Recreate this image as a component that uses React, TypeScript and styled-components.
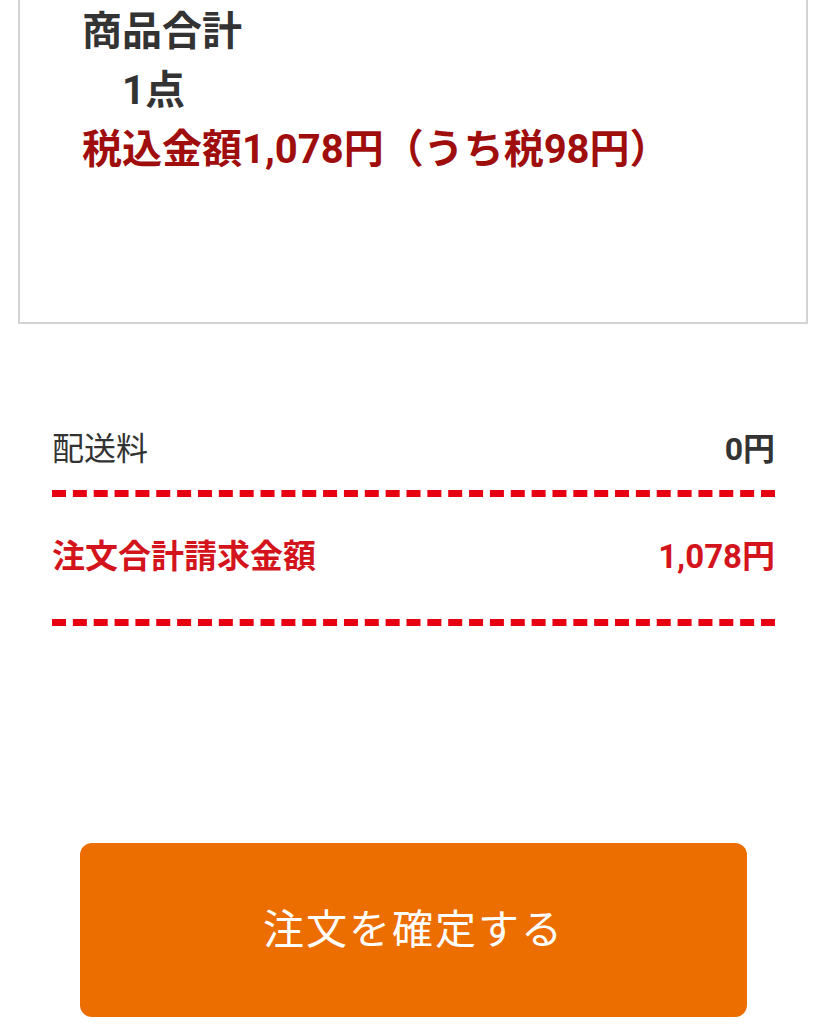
import React from 'react';
import styled, { createGlobalStyle } from 'styled-components';

const GlobalStyle = createGlobalStyle`
  body {
    margin: 0;
    background: #ffffff;
    font-family: Roboto, "Noto Sans CJK JP", "Noto Sans", sans-serif;
  }
`

const Page = styled.div`
  width: 826px;
  display: flex;
  flex-direction: column;
`

// 商品合計ボックス
const ItemBox = styled.div`
  margin: 0 18px;
  height: 324px;
  box-sizing: border-box;
  border: 2px solid #d3d3d3;
  border-top: none;
  padding: 2px 0 0 62px;
  display: flex;
  flex-direction: column;
`

const BoxLine = styled.div<{ $red?: boolean; $indent?: number }>`
  font-size: 40px;
  font-weight: 700;
  line-height: 59px;
  color: ${p => (p.$red ? '#a00d0d' : '#333333')};
  padding-left: ${p => p.$indent || 0}px;
`

// 配送料・合計
const Summary = styled.div`
  margin: 0 51px 0 52px;
  padding-top: 98px;
  display: flex;
  flex-direction: column;
`

const Row = styled.div<{ $pad: string; $total?: boolean }>`
  display: flex;
  justify-content: space-between;
  align-items: center;
  padding: ${p => p.$pad};
  border-bottom: 7px dashed #e60012;
  font-size: ${p => (p.$total ? 33 : 32)}px;
  line-height: 44px;
  color: ${p => (p.$total ? '#d4141c' : '#333333')};
  font-weight: ${p => (p.$total ? 700 : 400)};
`

const Amount = styled.span`
  font-weight: 700;
`

const ConfirmButton = styled.button`
  margin: 217px 79px 0 80px;
  height: 174px;
  padding: 0 0 8px 0;
  border: none;
  border-radius: 12px;
  background: #ec6d00;
  color: #ffffff;
  font-family: Roboto, "Noto Sans CJK JP", "Noto Sans", sans-serif;
  font-size: 41px;
  font-weight: 400;
  letter-spacing: 2px;
  cursor: pointer;
`

const App = () => {
  return (
    <>
      <GlobalStyle />
      <Page>
        <ItemBox>
          <BoxLine>商品合計</BoxLine>
          <BoxLine $indent={40}>1点</BoxLine>
          <BoxLine $red>税込金額1,078円（うち税98円）</BoxLine>
        </ItemBox>
        <Summary>
          <Row $pad="5px 0 19px 0">
            <span>配送料</span>
            <Amount>0円</Amount>
          </Row>
          <Row $pad="38px 0 40px 0" $total>
            <span>注文合計請求金額</span>
            <Amount>1,078円</Amount>
          </Row>
        </Summary>
        <ConfirmButton>注文を確定する</ConfirmButton>
      </Page>
    </>
  )
}

export default App
